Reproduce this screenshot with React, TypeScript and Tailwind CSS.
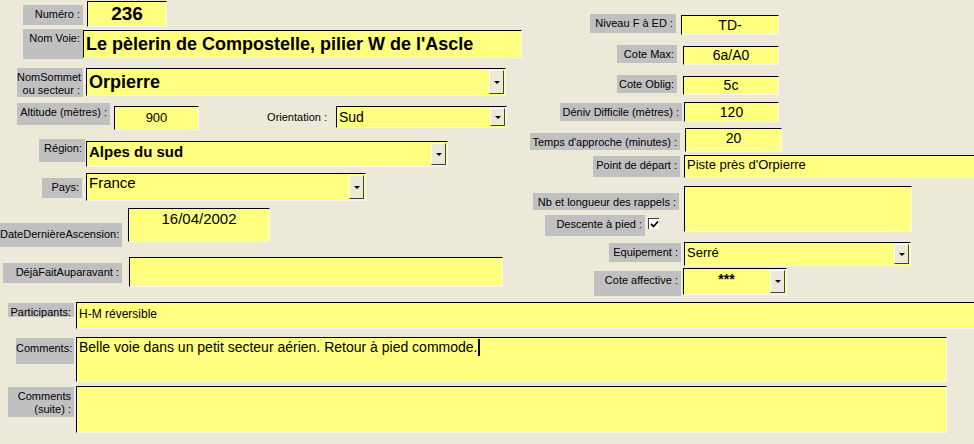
import React from "react";

const lbl =
  "shrink-0 bg-[#c0c0c0] text-black text-[11px] leading-[13px] text-right pr-[3px] pt-[3px] whitespace-nowrap";
const fld =
  "shrink-0 bg-[#ffff80] border-t border-l border-r border-b border-t-black border-l-black border-r-[#f6f6f6] border-b-[#f6f6f6] overflow-hidden whitespace-nowrap text-black";

function Arrow() {
  return (
    <div className="shrink-0 w-[15px] self-stretch m-[1px] bg-[#ece9d8] border-t border-l border-r border-b border-t-white border-l-white border-r-[#404040] border-b-[#404040] flex items-center justify-center">
      <div className="w-0 h-0 border-l-[3px] border-r-[3px] border-t-[3px] border-l-transparent border-r-transparent border-t-black" />
    </div>
  );
}

function CheckBox() {
  return (
    <div className="w-[11px] h-[11px] bg-white border-t border-l border-t-[#404040] border-l-[#404040] flex items-center justify-center">
      <svg width="9" height="9" viewBox="0 0 9 9">
        <path d="M1 4 L3.5 6.5 L8 1.5" stroke="black" strokeWidth="1.8" fill="none" />
      </svg>
    </div>
  );
}

export default function App() {
  return (
    <div className="w-[974px] h-[444px] bg-[#ece9d8] overflow-hidden font-['Liberation_Sans',Arial,sans-serif]">
      <div className="flex h-[302px]">
        {/* colonne gauche */}
        <div className="w-[530px] shrink-0 pt-[1px] flex flex-col">
          <div className="flex items-start h-[28px]">
            <div className={`${lbl} mt-[4px] ml-[23px] w-[60px] h-[20px]`}>Numéro :</div>
            <div className={`${fld} ml-[4px] w-[80px] h-[26px] flex items-center justify-center text-[19px] font-bold`}>236</div>
          </div>
          <div className="flex items-start h-[39px]">
            <div className={`${lbl} ml-[23px] w-[60px] h-[30px]`}>Nom Voie:</div>
            <div className={`${fld} mt-[1px] w-[439px] h-[28px] flex items-center pl-[2px] text-[18px] font-bold`}>
              Le pèlerin de Compostelle, pilier W de l'Ascle
            </div>
          </div>
          <div className="flex items-start h-[35px]">
            <div className={`${lbl} ml-[17px] w-[66px] h-[29px] leading-[12px] pt-[2px]`}>
              NomSommet
              <br />
              ou secteur :
            </div>
            <div className={`${fld} ml-[3px] w-[420px] h-[28px] flex`}>
              <div className="flex-1 flex items-center pl-[2px] text-[18px] font-bold">Orpierre</div>
              <Arrow />
            </div>
          </div>
          <div className="flex items-start h-[36px]">
            <div className={`${lbl} ml-[17px] w-[93px] h-[22px]`}>Altitude (mètres) :</div>
            <div className={`${fld} mt-[3px] ml-[4px] w-[85px] h-[24px] flex items-center justify-center text-[13px]`}>900</div>
            <div className="shrink-0 mt-[8px] ml-[65px] w-[66px] text-right pr-[3px] text-[11px] leading-[13px]">Orientation :</div>
            <div className={`${fld} mt-[3px] ml-[6px] w-[171px] h-[22px] flex`}>
              <div className="flex-1 flex items-center pl-[2px] text-[14px]">Sud</div>
              <Arrow />
            </div>
          </div>
          <div className="flex items-start h-[34px]">
            <div className={`${lbl} ml-[39px] w-[46px] h-[23px]`}>Région:</div>
            <div className={`${fld} mt-[2px] ml-[1px] w-[362px] h-[26px] flex`}>
              <div className="flex-1 pl-[2px] pt-[1px] text-[15px] leading-[18px] font-bold">Alpes du sud</div>
              <Arrow />
            </div>
          </div>
          <div className="flex items-start h-[35px]">
            <div className={`${lbl} mt-[5px] ml-[42px] w-[40px] h-[20px]`}>Pays:</div>
            <div className={`${fld} ml-[4px] w-[280px] h-[28px] flex`}>
              <div className="flex-1 pl-[2px] text-[15px] leading-[18px]">France</div>
              <Arrow />
            </div>
          </div>
          <div className="flex items-start h-[49px]">
            <div className={`${lbl} mt-[15px] w-[122px] h-[24px] pt-[5px]`}>DateDernièreAscension:</div>
            <div className={`${fld} ml-[6px] w-[142px] h-[34px] text-center text-[15px] leading-[20px]`}>16/04/2002</div>
          </div>
          <div className="flex items-start">
            <div className={`${lbl} mt-[6px] ml-[3px] w-[119px] h-[20px]`}>DéjàFaitAuparavant :</div>
            <div className={`${fld} ml-[7px] w-[374px] h-[30px]`} />
          </div>
        </div>

        {/* colonne droite */}
        <div className="flex-1 pt-[14px] flex flex-col">
          <div className="flex items-start h-[31px]">
            <div className={`${lbl} ml-[60px] w-[86px] h-[19px]`}>Niveau F à ED :</div>
            <div className={`${fld} mt-[1px] ml-[5px] w-[98px] h-[20px] flex items-center justify-center text-[14px]`}>TD-</div>
          </div>
          <div className="flex items-start h-[30px]">
            <div className={`${lbl} ml-[87px] w-[60px] h-[18px]`}>Cote Max:</div>
            <div className={`${fld} mt-[1px] ml-[6px] w-[96px] h-[19px] flex items-center justify-center text-[14px]`}>6a/A0</div>
          </div>
          <div className="flex items-start h-[27px]">
            <div className={`${lbl} ml-[87px] w-[60px] h-[18px]`}>Cote Oblig:</div>
            <div className={`${fld} mt-[1px] ml-[6px] w-[96px] h-[19px] flex items-center justify-center text-[14px]`}>5c</div>
          </div>
          <div className="flex items-start h-[26px]">
            <div className={`${lbl} mt-[1px] ml-[30px] w-[122px] h-[18px]`}>Déniv Difficile (mètres) :</div>
            <div className={`${fld} ml-[2px] w-[95px] h-[20px] flex items-center justify-center text-[14px]`}>120</div>
          </div>
          <div className="flex items-start h-[27px]">
            <div className={`${lbl} mt-[5px] w-[150px] h-[17px] pt-[2px]`}>Temps d'approche (minutes) :</div>
            <div className={`${fld} ml-[5px] w-[97px] h-[24px] text-center text-[14px] leading-[18px]`}>20</div>
          </div>
          <div className="flex items-start h-[31px]">
            <div className={`${lbl} mt-[1px] ml-[63px] w-[87px] h-[21px]`}>Point de départ :</div>
            <div className={`${fld} ml-[4px] w-[300px] h-[23px] pl-[2px] pt-[1px] text-[13px] leading-[16px]`}>Piste près d'Orpierre</div>
          </div>
          <div className="flex items-start h-[56px]">
            <div className="w-[150px] shrink-0 flex flex-col">
              <div className={`${lbl} mt-[7px] ml-[3px] w-[146px] h-[17px] pt-[2px]`}>Nb et longueur des rappels :</div>
              <div className="flex items-start mt-[5px] ml-[15px]">
                <div className={`${lbl} w-[100px] h-[21px]`}>Descente à pied :</div>
                <div className="ml-[3px] mt-[3px]">
                  <CheckBox />
                </div>
              </div>
            </div>
            <div className={`${fld} ml-[4px] w-[228px] h-[46px]`} />
          </div>
          <div className="flex items-start h-[26px]">
            <div className={`${lbl} mt-[1px] ml-[79px] w-[72px] h-[19px]`}>Equipement :</div>
            <div className={`${fld} ml-[3px] w-[227px] h-[24px] flex`}>
              <div className="flex-1 pl-[2px] pt-[2px] text-[13px] leading-[16px]">Serré</div>
              <Arrow />
            </div>
          </div>
          <div className="flex items-start">
            <div className={`${lbl} mt-[3px] ml-[64px] w-[87px] h-[25px]`}>Cote affective :</div>
            <div className={`${fld} ml-[2px] w-[104px] h-[27px] flex`}>
              <div className="flex-1 text-center pt-[2px] text-[14px] leading-[16px] font-bold">***</div>
              <Arrow />
            </div>
          </div>
        </div>
      </div>

      {/* bas du formulaire */}
      <div className="flex flex-col">
        <div className="flex items-start h-[35px]">
          <div className={`${lbl} mt-[1px] ml-[8px] w-[66px] h-[14px] text-[10px] leading-[12px] pt-[1px]`}>Participants:</div>
          <div className={`${fld} ml-[2px] w-[910px] h-[27px] pl-[2px] pt-[4px] text-[12px] leading-[15px]`}>H-M réversible</div>
        </div>
        <div className="flex items-start h-[49px]">
          <div className={`${lbl} mt-[1px] ml-[16px] w-[58px] h-[26px] text-[10px] leading-[12px] pt-[4px]`}>Comments:</div>
          <div className={`${fld} ml-[2px] w-[871px] h-[45px] pl-[2px] pt-[1px] text-[14px] leading-[17px] flex items-start`}>
            Belle voie dans un petit secteur aérien. Retour à pied commode.
            <span className="inline-block w-[2px] h-[17px] bg-black ml-[1px]" />
          </div>
        </div>
        <div className="flex items-start">
          <div className={`${lbl} mt-[1px] ml-[8px] w-[66px] h-[30px] text-[11px] leading-[13px] pt-[2px]`}>
            Comments
            <br />
            (suite) :
          </div>
          <div className={`${fld} ml-[2px] w-[871px] h-[47px]`} />
        </div>
      </div>
    </div>
  );
}
